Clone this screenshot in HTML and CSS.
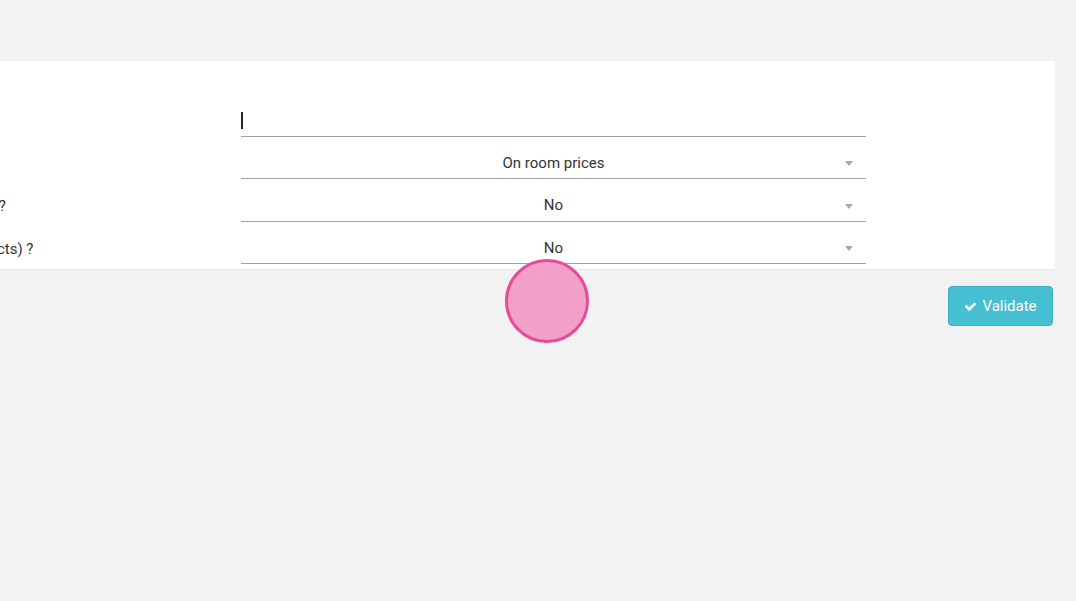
FILE: index.html
```html
<!DOCTYPE html>
<html lang="en">

<head>
  <meta charset="UTF-8">
  <meta name="viewport" content="width=device-width, initial-scale=1.0">
  <title>Discount settings</title>
  <link rel="stylesheet" href="styles.css">
</head>

<body>
  <main class="page">
    <form class="panel">
      <div class="row">
        <label class="label">Name</label>
        <div class="field field-text"><span class="caret"></span></div>
      </div>
      <div class="row">
        <label class="label">Type</label>
        <div class="field field-select">
          <span class="value">On room prices</span>
          <span class="arrow"></span>
        </div>
      </div>
      <div class="row">
        <label class="label">Display the discount on the invoice ?</label>
        <div class="field field-select">
          <span class="value">No</span>
          <span class="arrow"></span>
        </div>
      </div>
      <div class="row">
        <label class="label">Apply the discount to extras (products) ?</label>
        <div class="field field-select">
          <span class="value">No</span>
          <span class="arrow"></span>
        </div>
      </div>
    </form>
    <div class="actions">
      <button type="button" class="btn-validate">
        <svg class="check" viewBox="0 0 1792 1792" width="13" height="13">
          <path fill="currentColor" d="M1671 566q0 40-28 68l-724 724-136 136q-28 28-68 28t-68-28l-136-136-362-362q-28-28-28-68t28-68l136-136q28-28 68-28t68 28l294 295 656-657q28-28 68-28t68 28l136 136q28 28 28 68z"/>
        </svg>
        Validate
      </button>
    </div>
  </main>
  <div class="click-marker"></div>
</body>

</html>
```

FILE: styles.css
```css
:root {
  font-family: Roboto, 'Liberation Sans', sans-serif;
}

html,
body {
  overflow: hidden;
}

body {
  background-color: #f2f2f2;
  color: #333;
  margin: 0;
  padding: 0;
  height: 601px;
}

.page {
  padding-top: 61px;
}

.panel {
  background-color: #fff;
  margin-left: -236px;
  width: 1291px;
  box-sizing: border-box;
  padding: 43px 0 5px 0;
  border-bottom: 1px solid #e6e6e6;
  display: flex;
  flex-direction: column;
  gap: 9.4px;
}

.row {
  display: grid;
  grid-template-columns: 477px 625px;
  align-items: center;
  font-size: 15px;
}

.label {
  text-align: left;
  white-space: nowrap;
  padding-top: 2px;
}

.field {
  height: 33px;
  border-bottom: 1px solid #a3a3a3;
  box-sizing: border-box;
  display: flex;
  align-items: center;
  position: relative;
}

.caret {
  display: block;
  width: 2px;
  height: 17px;
  background-color: #222;
  margin-top: 1px;
}

.field-select {
  justify-content: center;
}

.field-select .value {
  padding-top: 1px;
}

.arrow {
  position: absolute;
  right: 13px;
  top: 15px;
  width: 0;
  height: 0;
  border-left: 4px solid transparent;
  border-right: 4px solid transparent;
  border-top: 5px solid #a8a8a8;
}

.actions {
  display: flex;
  justify-content: flex-end;
  padding: 16px 23px 0 0;
}

.btn-validate {
  font-family: Roboto, 'Liberation Sans', sans-serif;
  font-size: 15px;
  color: #fff;
  background-color: #45bfd1;
  border: 1px solid #3aafc0;
  border-radius: 4px;
  width: 105px;
  height: 40px;
  display: flex;
  align-items: center;
  justify-content: center;
  gap: 5px;
  padding: 0;
}

.check {
  display: block;
}

.click-marker {
  position: absolute;
  left: 505px;
  top: 259px;
  width: 78px;
  height: 78px;
  border-radius: 50%;
  background-color: #f2a0c9;
  border: 3px solid #e64b98;
}
```
